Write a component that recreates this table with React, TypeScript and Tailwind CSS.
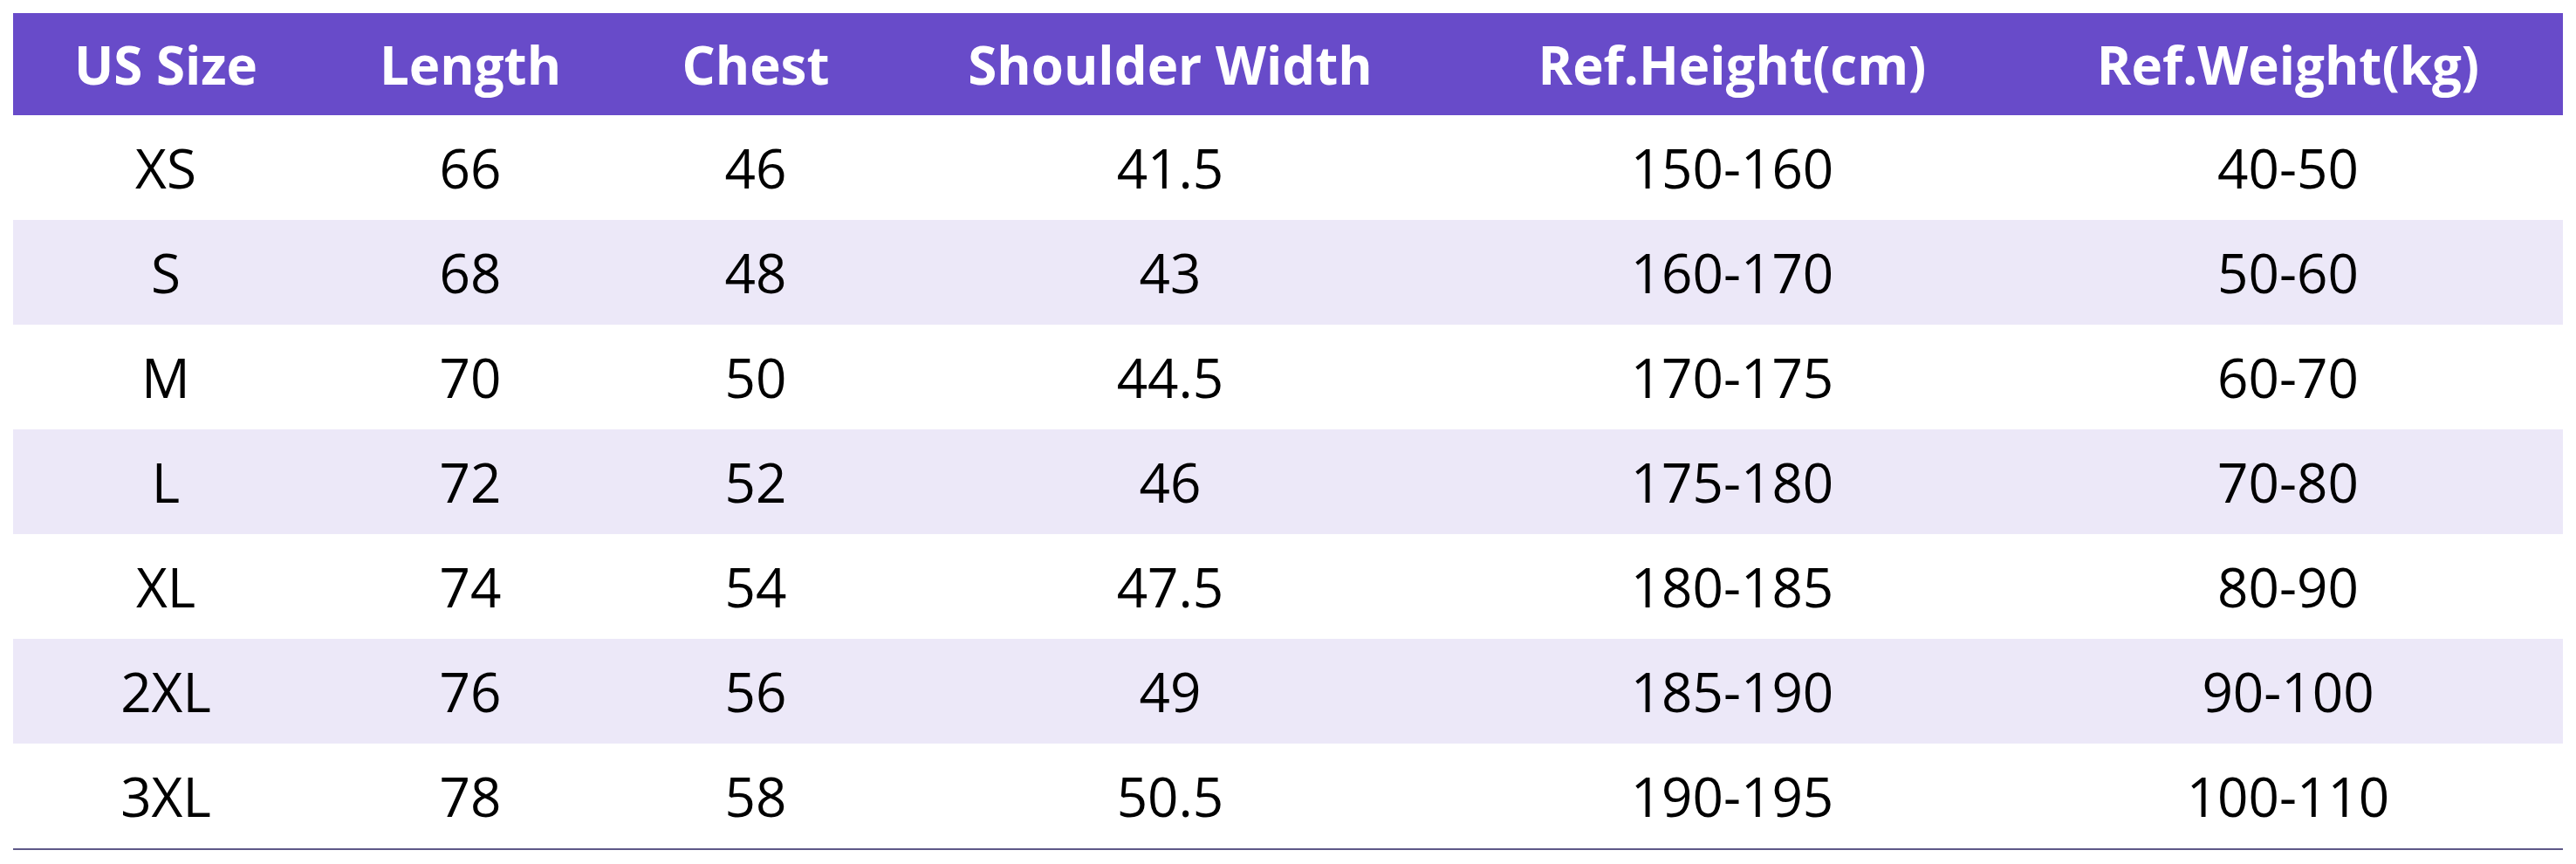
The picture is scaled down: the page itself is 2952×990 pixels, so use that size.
const headers = ["US Size", "Length", "Chest", "Shoulder Width", "Ref.Height(cm)", "Ref.Weight(kg)"];

const rows = [
  ["XS", "66", "46", "41.5", "150-160", "40-50"],
  ["S", "68", "48", "43", "160-170", "50-60"],
  ["M", "70", "50", "44.5", "170-175", "60-70"],
  ["L", "72", "52", "46", "175-180", "70-80"],
  ["XL", "74", "54", "47.5", "180-185", "80-90"],
  ["2XL", "76", "56", "49", "185-190", "90-100"],
  ["3XL", "78", "58", "50.5", "190-195", "100-110"],
];

const cols = "grid grid-cols-[350px_348px_306px_644px_644px_630px]";

export default function App() {
  return (
    <div className="h-[990px] w-[2952px] bg-white pl-[15px] pt-[15px] font-['Open_Sans',sans-serif]">
      <div className="w-[2922px]">
        <div className={`${cols} h-[117px] items-center bg-[#684bc9] text-[60px] font-bold text-white`}>
          {headers.map((h) => (
            <div key={h} className="text-center">
              {h}
            </div>
          ))}
        </div>
        {rows.map((r, i) => (
          <div
            key={r[0]}
            className={`${cols} h-[120px] items-center text-[62px] text-black ${i % 2 === 1 ? "bg-[#ece8f8]" : "bg-white"}`}
          >
            {r.map((c, j) => (
              <div key={j} className="text-center">
                {c}
              </div>
            ))}
          </div>
        ))}
        <div className="h-[2px] bg-[#5e5888]" />
      </div>
    </div>
  );
}
